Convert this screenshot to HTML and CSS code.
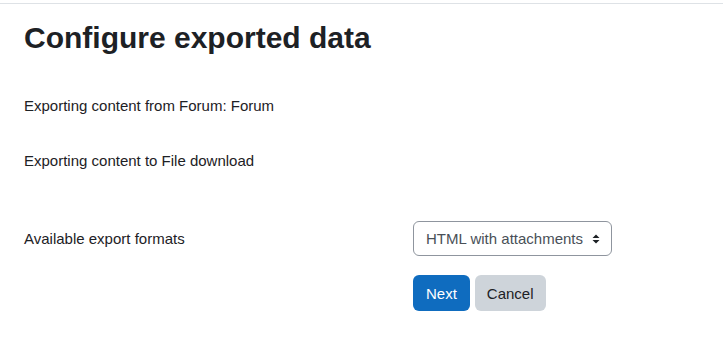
FILE: index.html
```html
<!DOCTYPE html>
<html lang="en">
<head>
    <meta charset="UTF-8">
    <meta name="viewport" content="width=device-width, initial-scale=1.0">
    <title>Configure exported data</title>
    <link rel="stylesheet" href="styles.css">
</head>
<body>
    <div class="page">
        <h2>Configure exported data</h2>

        <p class="info">Exporting content from Forum: Forum</p>
        <p class="info">Exporting content to File download</p>

        <form class="export-form" onsubmit="return false">
            <div class="form-row">
                <label for="format">Available export formats</label>
                <div class="select-wrap">
                    <select id="format" class="custom-select">
                        <option>HTML with attachments</option>
                    </select>
                    <svg class="select-arrow" width="8" height="10" viewBox="0 0 8 10">
                        <path d="M4 0.5L7.5 4H0.5Z M4 9.5L0.5 6H7.5Z" fill="#1d2125"/>
                    </svg>
                </div>
            </div>
            <div class="form-row">
                <span></span>
                <div class="buttons">
                    <button class="btn btn-primary">Next</button>
                    <button class="btn btn-secondary">Cancel</button>
                </div>
            </div>
        </form>
    </div>
</body>
</html>
```

FILE: styles.css
```css
body {
    margin: 0;
    font-family: "Liberation Sans", Arial, sans-serif;
    font-size: 15px;
    color: #1d2125;
    background-color: white;
}
.page {
    margin-top: 3px;
    border-top: 1px solid #dee2e6;
    padding: 16px 24px 0;
}
h2 {
    margin: 0 0 39px;
    font-size: 30px;
    font-weight: bold;
    line-height: 1.2;
}
.info {
    margin: 0 0 33px;
    line-height: 22px;
}
.export-form {
    margin-top: 49px;
}
.form-row {
    display: grid;
    grid-template-columns: 389px auto;
    align-items: center;
    margin-bottom: 19px;
}
.select-wrap {
    position: relative;
    width: 199px;
}
.custom-select {
    display: block;
    appearance: none;
    width: 199px;
    height: 35px;
    padding: 0 28px 0 12px;
    border: 1px solid #8f959e;
    border-radius: 6px;
    background-color: white;
    font-family: inherit;
    font-size: 15px;
    color: #495057;
}
.select-arrow {
    position: absolute;
    right: 12px;
    top: 13px;
    pointer-events: none;
}
.buttons {
    display: flex;
    gap: 5px;
}
.btn {
    height: 36px;
    padding: 0 12px;
    border: none;
    border-radius: 6px;
    font-family: inherit;
    font-size: 15px;
    cursor: pointer;
}
.btn-primary {
    padding: 0 13px;
    background-color: #0f6cbf;
    color: white;
}
.btn-secondary {
    background-color: #ced4da;
    color: #1d2125;
}
```
